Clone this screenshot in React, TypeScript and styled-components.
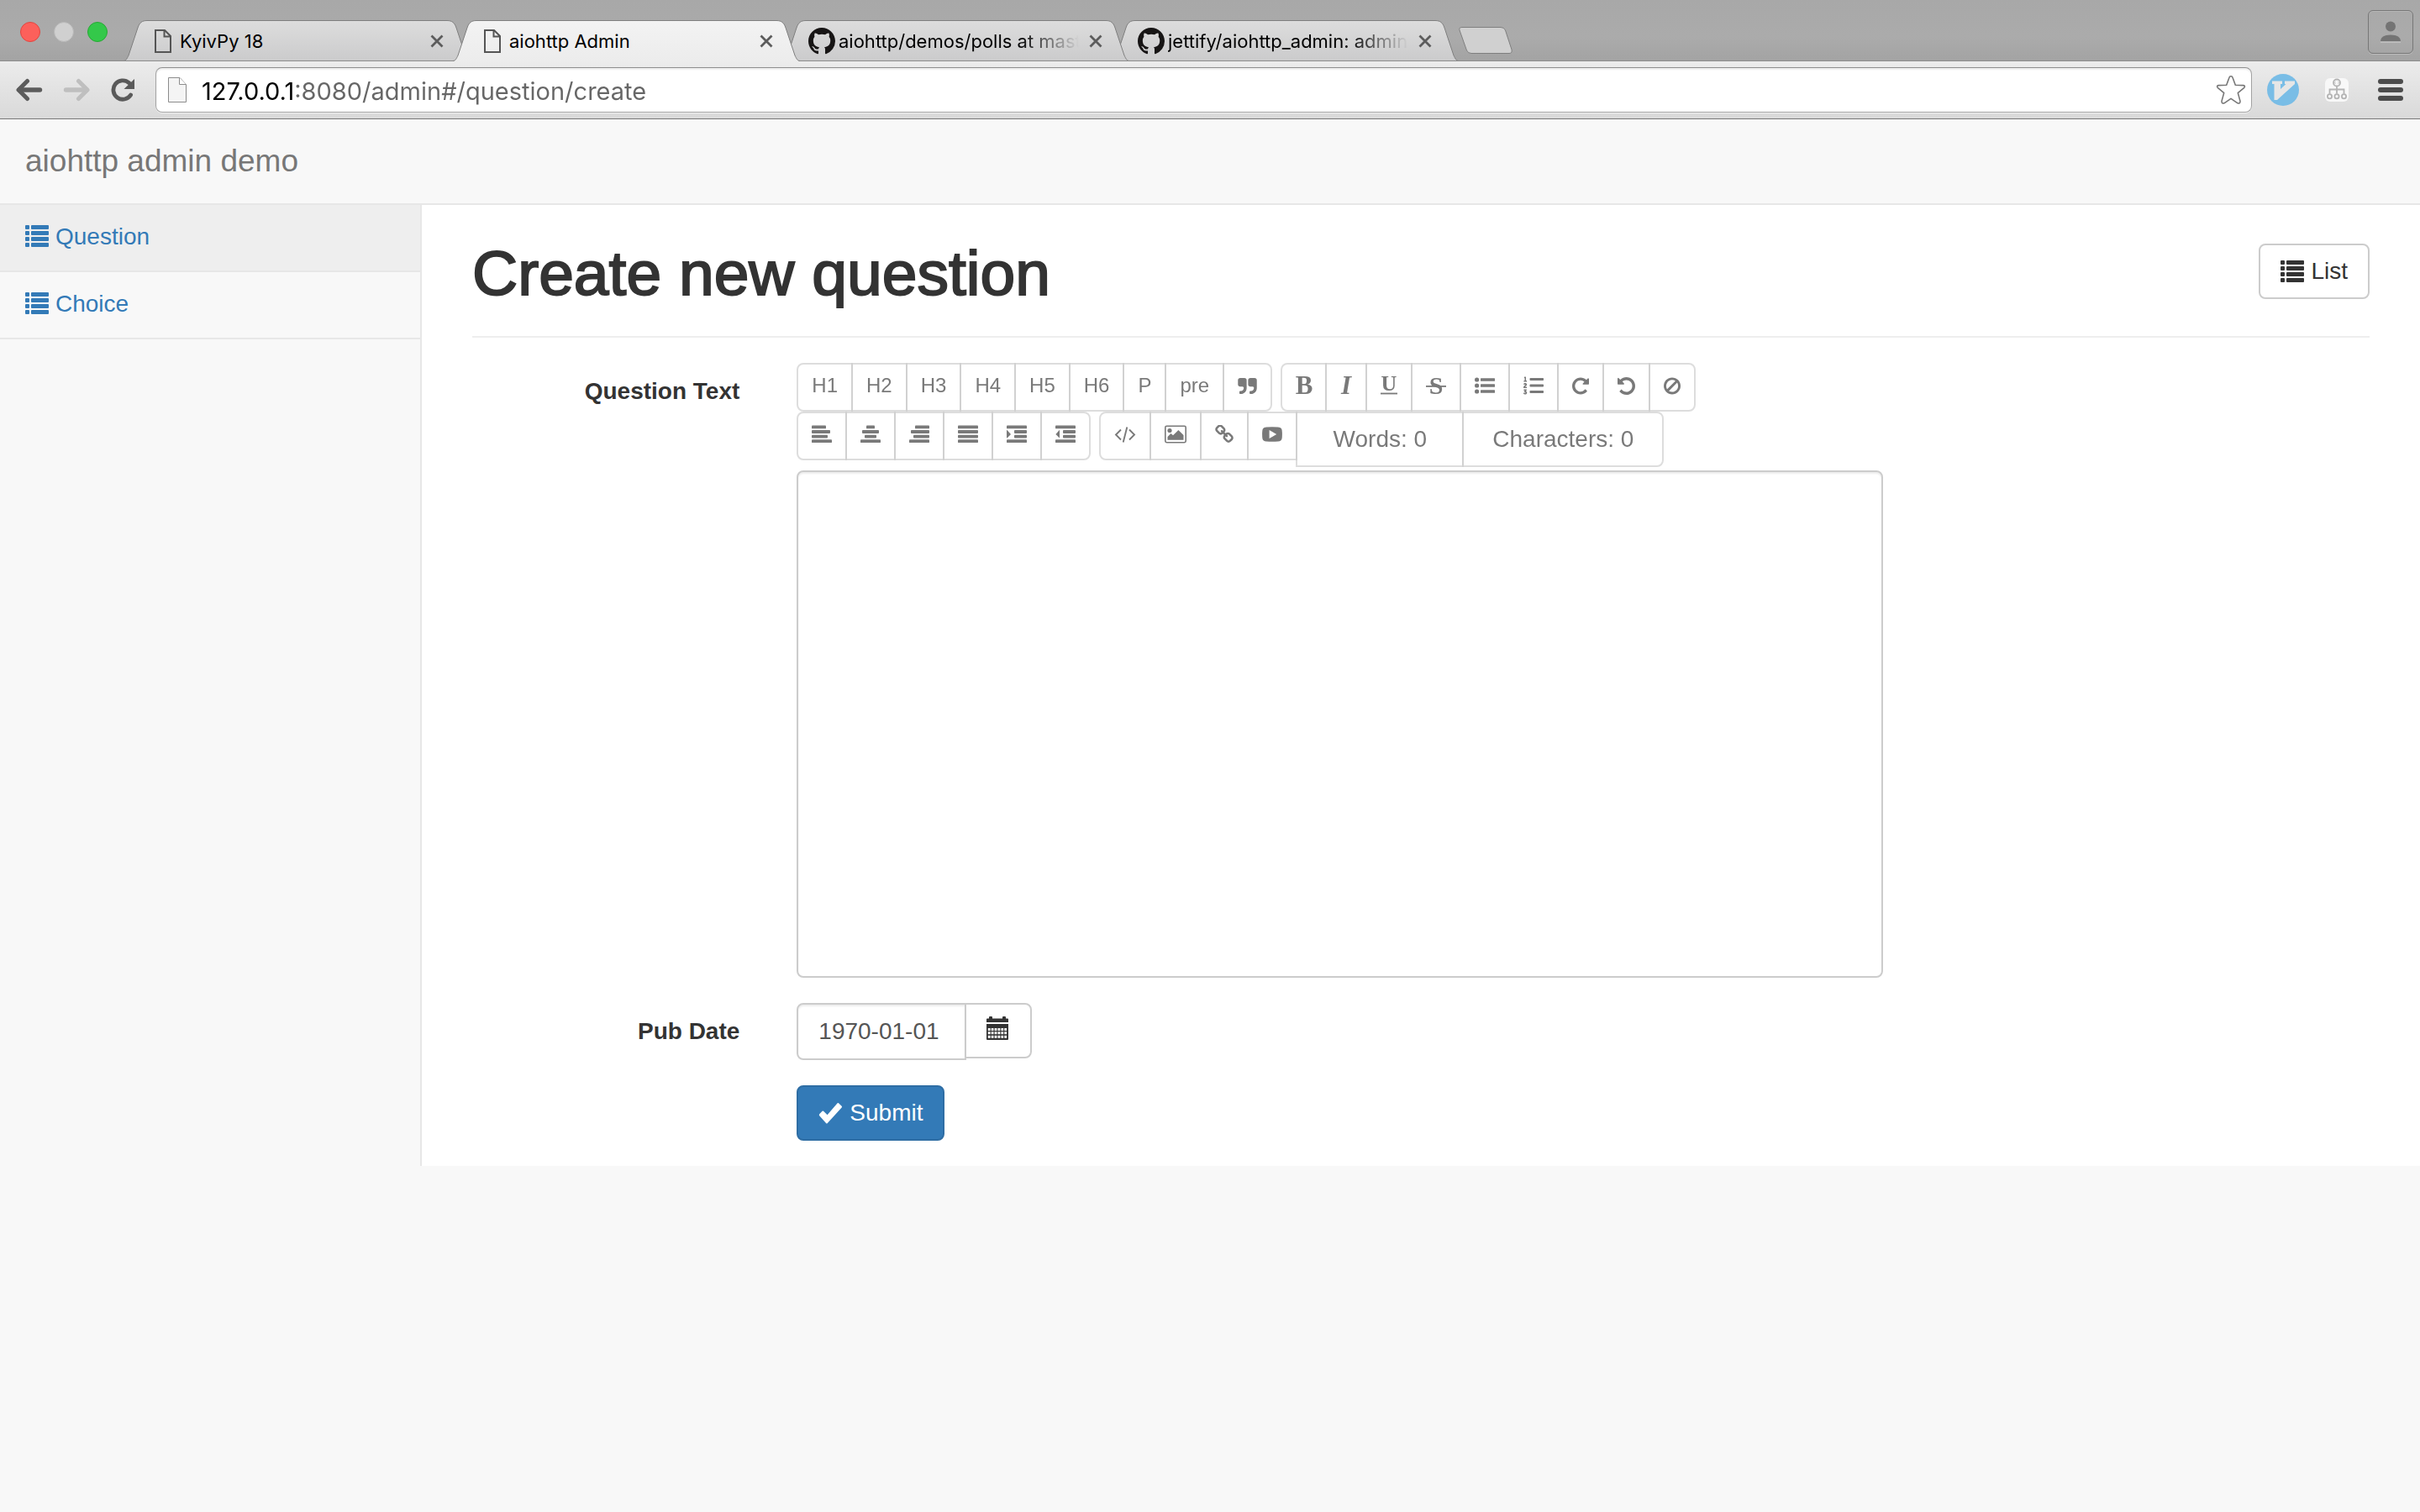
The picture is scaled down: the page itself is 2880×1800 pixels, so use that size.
import React, { useLayoutEffect, useState } from "react";
import styled, { createGlobalStyle, css } from "styled-components";
import { FaListOl } from "react-icons/fa";

const sans = `"Liberation Sans", Arial, Helvetica, sans-serif`;
const ui = `Inter, Roboto, sans-serif`;

const GlobalStyle = createGlobalStyle`
  *, *::before, *::after { box-sizing: border-box; }
  body { margin: 0; background: #f8f8f8; color: #333; font-family: ${sans}; font-size: 28px; line-height: 40px; }
  button, input, textarea { font: inherit; color: inherit; margin: 0; }
  svg { display: block; flex: none; }
`;

/* ---------- browser window ---------- */

const TabStrip = styled.header`
  display: flex;
  align-items: flex-end;
  height: 73px;
  padding: 0 8px 0 24px;
  background: linear-gradient(#a8a8a8, #ababab 60%, #a3a3a3);
  box-shadow: inset 0 -1px #8c8c8c;
`;

const WindowButtons = styled.div`
  display: flex;
  align-items: center;
  gap: 16px;
  height: 24px;
  margin: 0 19px 23px 0;
`;

const Light = styled.button<{ $fill: string; $edge: string }>`
  width: 24px;
  height: 24px;
  padding: 0;
  border: 1px solid ${(p) => p.$edge};
  border-radius: 50%;
  background: ${(p) => p.$fill};
`;

const Tabs = styled.nav`
  display: flex;
  flex: 1;
  align-items: flex-end;
`;

const TabItem = styled.div<{ $level: number }>`
  position: relative;
  z-index: ${(p) => p.$level};
  display: flex;
  align-items: center;
  width: 413px;
  height: 49px;
  padding: 0 20px 0 27px;
  & + & { margin-left: -21px; }
`;

const TabShape = styled.svg`
  position: absolute;
  inset: 0;
  z-index: -1;
`;

const TabButton = styled.button`
  display: flex;
  align-items: center;
  flex: 1;
  min-width: 0;
  padding: 0;
  border: 0;
  background: none;
  color: #000;
  font: 22px/32px ${ui};
  text-align: left;
`;

const TabIcon = styled.span`
  display: flex;
  justify-content: center;
  flex: none;
  width: 40px;
`;

const TabTitle = styled.span<{ $fade?: boolean }>`
  flex: 1;
  overflow: hidden;
  white-space: nowrap;
  ${(p) => p.$fade && css`mask-image: linear-gradient(to right, #000 75%, transparent);`}
`;

const CloseButton = styled.button`
  display: flex;
  align-items: center;
  justify-content: center;
  width: 40px;
  height: 32px;
  padding: 0;
  border: 0;
  background: none;
`;

const NewTab = styled.button`
  width: 64px;
  height: 32px;
  margin-bottom: 9px;
  padding: 0;
  border: 0;
  background: none;
`;

const Profile = styled.button`
  display: flex;
  align-items: center;
  justify-content: center;
  width: 54px;
  height: 52px;
  margin-bottom: 9px;
  padding: 0;
  border: 1px solid #777;
  border-radius: 6px;
  background: none;
  box-shadow: 0 1px #bcbcbc, inset 0 1px #b6b6b6;
`;

const Toolbar = styled.div`
  display: flex;
  align-items: center;
  gap: 24px;
  height: 69px;
  padding: 0 16px 0 19px;
  border-bottom: 1px solid #777;
  background: linear-gradient(#ececec, #d9d9d9);
`;

const ToolButton = styled.button<{ $w: number }>`
  display: flex;
  align-items: center;
  justify-content: center;
  width: ${(p) => p.$w}px;
  height: 40px;
  padding: 0;
  border: 0;
  background: none;
`;

const Extensions = styled.div`
  display: flex;
  gap: 26px;
  margin-left: -6px;
`;

const Omnibox = styled.div`
  display: flex;
  align-items: center;
  gap: 18px;
  flex: 1;
  height: 54px;
  padding: 0 6px 0 14px;
  border: 1px solid #a3a3a3;
  border-top-color: #8f8f8f;
  border-radius: 8px;
  background: #fff;
  box-shadow: 0 1px #f2f2f2, inset 0 2px 2px #eee;
`;

const Address = styled.input`
  flex: 1;
  min-width: 0;
  height: 40px;
  padding: 2px 0 0;
  border: 0;
  outline: 0;
  font: 29px/38px ${ui};
  color: #666;
  background-clip: text;
  -webkit-text-fill-color: transparent;
`;

/* ---------- admin page ---------- */

const Navbar = styled.div`
  display: flex;
  align-items: center;
  height: 102px;
  padding: 0 30px;
  border-bottom: 2px solid #e7e7e7;
  background: #f8f8f8;
`;

const Brand = styled.a`
  color: #777;
  font-size: 37px;
  line-height: 40px;
  text-decoration: none;
`;

const Columns = styled.div`
  display: flex;
`;

const Sidebar = styled.nav`
  width: 502px;
  border-right: 2px solid #e7e7e7;
`;

const Menu = styled.ul`
  margin: 0;
  padding: 0;
  list-style: none;
`;

const MenuLink = styled.a<{ $active?: boolean }>`
  display: flex;
  gap: 8px;
  padding: 18px 30px 20px;
  border-bottom: 2px solid #e7e7e7;
  background: ${(p) => (p.$active ? "#eee" : "transparent")};
  color: #337ab7;
  text-decoration: none;
  svg { margin-top: 6px; }
`;

const Main = styled.main`
  flex: 1;
  min-width: 0;
  padding: 40px 60px 30px;
  background: #fff;
`;

const PageHeader = styled.div`
  display: flex;
  align-items: flex-start;
  justify-content: space-between;
  padding-bottom: 34px;
  margin-bottom: 30px;
  border-bottom: 2px solid #eee;
  > button { margin-top: 6px; }
`;

const Title = styled.h1`
  margin: 0;
  font-size: 75px;
  font-weight: 500;
  line-height: 82px;
  -webkit-text-stroke: 2px #333;
`;

const Button = styled.button<{ $primary?: boolean }>`
  display: inline-flex;
  align-items: center;
  gap: 8px;
  padding: 12px 24px;
  border: 2px solid ${(p) => (p.$primary ? "#2e6da4" : "#ccc")};
  border-radius: 8px;
  background: ${(p) => (p.$primary ? "#337ab7" : "#fff")};
  color: ${(p) => (p.$primary ? "#fff" : "#333")};
  line-height: 38px;
  white-space: nowrap;
`;

const FormRow = styled.div`
  display: grid;
  grid-template-columns: 2fr 7fr 3fr;
  margin: 0 -30px;
  & + & { margin-top: 30px; }
`;

const Label = styled.label`
  padding: 14px 38px 0 30px;
  font-weight: 700;
  text-align: right;
`;

const Field = styled.div`
  grid-column: 2;
  display: flex;
  flex-direction: column;
  align-items: flex-start;
  padding: 0 30px;
`;

const EditorBar = styled.div`
  display: flex;
  flex-wrap: wrap;
  align-items: flex-start;
  column-gap: 10px;
  margin-bottom: 4px;
`;

const Group = styled.div`
  display: flex;
  align-items: flex-start;
`;

const EditButton = styled.button`
  display: flex;
  align-items: center;
  height: 58px;
  padding: 8px 16px 12px;
  border: 2px solid #ccc;
  background: #fff;
  color: #333;
  opacity: 0.65;
  font-size: 24px;
  line-height: 34px;
  & + & { margin-left: -2px; }
  &:first-child { border-radius: 8px 0 0 8px; }
  &:last-child { border-radius: 0 8px 8px 0; }
`;

const Counter = styled(EditButton)<{ $min: number }>`
  justify-content: center;
  height: 66px;
  min-width: ${(p) => p.$min}px;
  padding: 12px 24px;
  font-size: 28px;
`;

const Editor = styled.textarea`
  display: block;
  width: 100%;
  height: 604px;
  padding: 12px 24px;
  border: 2px solid #ccc;
  border-radius: 8px;
  background: #fff;
  box-shadow: inset 0 2px 2px rgba(0, 0, 0, 0.075);
  resize: none;
  outline: 0;
`;

const DateGroup = styled.div`
  display: flex;
  align-items: flex-start;
`;

const DateInput = styled.input`
  width: 202px;
  height: 68px;
  padding: 12px 24px;
  border: 2px solid #ccc;
  border-radius: 8px 0 0 8px;
  background: #fff;
  color: #555;
  box-shadow: inset 0 2px 2px rgba(0, 0, 0, 0.075);
  outline: 0;
`;

const CalendarButton = styled(Button)`
  height: 66px;
  margin-left: -2px;
  border-radius: 0 8px 8px 0;
  svg { margin-top: -6px; }
`;

/* ---------- icons ---------- */

const ListIcon = () => (
  <svg width="28" height="26" viewBox="0 0 28 26" fill="currentColor">
    {[0, 7, 14, 21].map((y) => (
      <g key={y}>
        <rect x="0" y={y} width="5" height="5" rx="1" />
        <rect x="7" y={y} width="21" height="5" rx="1" />
      </g>
    ))}
  </svg>
);

const CheckIcon = () => (
  <svg width="29" height="26" viewBox="0 0 29 26" fill="currentColor">
    <path d="M1.2 14.2 4.6 10.8Q5.3 10.2 6 10.8L10.6 15.2 22.4 1.4Q23.2.6 24 1.3L27.6 4.8Q28.4 5.6 27.7 6.4L10.6 25.2Q9.9 25.9 9.2 25.2L1.2 16.2Q.4 15.2 1.2 14.2Z" />
  </svg>
);

const CalendarIcon = () => (
  <svg width="28" height="28" viewBox="0 0 28 28" fill="currentColor">
    <path d="M0 7V3.5Q0 2.5 1 2.5H3V1Q3 0 4 0H6Q7 0 7 1V2.5H19V1Q19 0 20 0H22Q23 0 23 1V2.5H25Q26 2.5 26 3.5V7Z" />
    <path d="M0 9H26V27Q26 28 25 28H1Q0 28 0 27Z" />
    <g fill="#fff">
      {[14, 18.2, 22.8].map((y) =>
        [1.8, 5.7, 9.6, 13.5, 17.4, 21.3].map((x) => (
          <rect key={`${x}-${y}`} x={x} y={y} width="2.8" height="3" />
        ))
      )}
    </g>
  </svg>
);

type Bar = [number, number];
const Bars = ({ bars, arrow }: { bars: Bar[]; arrow?: string }) => (
  <svg width="24" height="22" viewBox="0 0 24 22" fill="currentColor">
    {bars.map(([x, w], i) => (
      <rect key={i} x={x} y={0.5 + i * 5.6} width={w} height="3.8" rx="0.9" />
    ))}
    {arrow && <path d={arrow} />}
  </svg>
);

const fa: Record<string, { box: string; w: number; h: number; d: string }> = {
  quote: {
    box: "64 128 1664 1408", w: 23, h: 19,
    d: "M832 320v704q0 104-40.5 198.5t-109.5 163.5-163.5 109.5-198.5 40.5h-64q-26 0-45-19t-19-45v-128q0-26 19-45t45-19h64q106 0 181-75t75-181v-32q0-40-28-68t-68-28h-224q-80 0-136-56t-56-136v-384q0-80 56-136t136-56h384q80 0 136 56t56 136zm896 0v704q0 104-40.5 198.5t-109.5 163.5-163.5 109.5-198.5 40.5h-64q-26 0-45-19t-19-45v-128q0-26 19-45t45-19h64q106 0 181-75t75-181v-32q0-40-28-68t-68-28h-224q-80 0-136-56t-56-136v-384q0-80 56-136t136-56h384q80 0 136 56t56 136z",
  },
  redo: {
    box: "128 128 1536 1536", w: 20, h: 21,
    d: "M1664 256v448q0 26-19 45t-45 19h-448q-42 0-59-40-17-39 14-69l138-138q-148-137-349-137-104 0-198.5 40.5t-163.5 109.5-109.5 163.5-40.5 198.5 40.5 198.5 109.5 163.5 163.5 109.5 198.5 40.5q119 0 225-52t179-147q7-10 23-12 15 0 25 9l137 138q9 8 9.5 20.5t-7.5 22.5q-109 132-264 204.5t-327 72.5q-156 0-298-61t-245-164-164-245-61-298 61-298 164-245 245-164 298-61q147 0 284.5 55.5t244.5 156.5l130-129q29-31 70-14 39 17 39 59z",
  },
  undo: {
    box: "128 128 1536 1536", w: 21, h: 21,
    d: "M1664 896q0 156-61 298t-164 245-245 164-298 61q-172 0-327-72.5t-264-204.5q-7-10-6.5-22.5t8.5-20.5l137-138q10-9 25-9 16 2 23 12 73 95 179 147t225 52q104 0 198.5-40.5t163.5-109.5 109.5-163.5 40.5-198.5-40.5-198.5-109.5-163.5-163.5-109.5-198.5-40.5q-98 0-188 35.5t-160 101.5l137 138q31 30 14 69-17 40-59 40h-448q-26 0-45-19t-19-45v-448q0-42 40-59 39-17 69 14l130 129q107-101 244.5-156.5t284.5-55.5q156 0 298 61t245 164 164 245 61 298z",
  },
  ban: {
    box: "128 128 1536 1536", w: 20, h: 21,
    d: "M1440 893q0-161-87-295l-754 753q137 89 297 89 111 0 211.5-43.5t173.5-116.5 116-174.5 43-212.5zm-999 299l755-754q-135-91-300-91-148 0-273 73t-198 199-73 274q0 162 89 299zm1223-299q0 157-61 300t-163.5 246-245 164-298.5 61-298.5-61-245-164-163.5-246-61-300 61-299.5 163.5-245.5 245-164 298.5-61 298.5 61 245 164 163.5 245.5 61 299.5z",
  },
  link: {
    box: "64 64 1664 1664", w: 22, h: 22,
    d: "M1520 1216q0-40-28-68l-208-208q-28-28-68-28-42 0-72 32 3 3 19 18.5t21.5 21.5 15 19 13 25.5 3.5 27.5q0 40-28 68t-68 28q-15 0-27.5-3.5t-25.5-13-19-15-21.5-21.5-18.5-19q-33 31-33 73 0 40 28 68l206 207q27 27 68 27 40 0 68-26l147-146q28-28 28-67zm-703-705q0-40-28-68l-206-207q-28-28-68-28-39 0-68 27l-147 146q-28 28-28 67 0 40 28 68l208 208q27 27 68 27 42 0 72-31-3-3-19-18.5t-21.5-21.5-15-19-13-25.5-3.5-27.5q0-40 28-68t68-28q15 0 27.5 3.5t25.5 13 19 15 21.5 21.5 18.5 19q33-31 33-73zm895 705q0 120-85 203l-147 146q-83 83-203 83-121 0-204-85l-206-207q-83-83-83-203 0-123 88-209l-88-88q-86 88-208 88-120 0-204-84l-208-208q-84-84-84-204t85-203l147-146q83-83 203-83 121 0 204 85l206 207q83 83 83 203 0 123-88 209l88 88q86-88 208-88 120 0 204 84l208 208q84 84 84 204z",
  },
};

const Glyph = ({ name }: { name: string }) => {
  const g = fa[name];
  return (
    <svg width={g.w} height={g.h} viewBox={g.box} fill="currentColor">
      <path d={g.d} />
    </svg>
  );
};

const serif = `"Liberation Serif", "Times New Roman", serif`;
const BoldIcon = () => (
  <svg width="19" height="22" viewBox="0 0 19 22" fill="currentColor" overflow="visible">
    <text x="10" y="21" textAnchor="middle" fontFamily={serif} fontSize="31" fontWeight="700">B</text>
  </svg>
);
const ItalicIcon = () => (
  <svg width="14" height="22" viewBox="0 0 14 22" fill="currentColor" overflow="visible">
    <text x="7" y="21" textAnchor="middle" fontFamily={serif} fontSize="31" fontWeight="700" fontStyle="italic">I</text>
  </svg>
);
const UnderlineIcon = () => (
  <svg width="20" height="22" viewBox="0 0 20 22" fill="currentColor" overflow="visible">
    <text x="10" y="17" textAnchor="middle" fontFamily={serif} fontSize="26" fontWeight="700">U</text>
    <rect x="0" y="19.6" width="20" height="1.8" />
  </svg>
);
const StrikeIcon = () => (
  <svg width="24" height="22" viewBox="0 0 24 22" fill="currentColor" overflow="visible">
    <text x="12" y="21" textAnchor="middle" fontFamily={serif} fontSize="30" fontWeight="700">S</text>
    <rect x="0" y="11" width="24" height="1.8" />
  </svg>
);
const BulletsIcon = () => (
  <svg width="24" height="20" viewBox="0 0 24 20" fill="currentColor">
    {[3, 10, 17].map((y) => (
      <g key={y}>
        <circle cx="2.6" cy={y} r="2.6" />
        <rect x="7" y={y - 1.7} width="17" height="3.4" rx="0.5" />
      </g>
    ))}
  </svg>
);
const CodeIcon = () => (
  <svg width="26" height="20" viewBox="0 0 26 20" fill="none" stroke="currentColor" strokeWidth="1.9">
    <path d="M8 4.5 2 10.5 8 16.5M18 4.5 24 10.5 18 16.5M15.3 1.5 10.7 19.5" />
  </svg>
);
const ImageIcon = () => (
  <svg width="26" height="22" viewBox="0 0 26 22" fill="currentColor">
    <rect x="0.8" y="1.3" width="24.4" height="19.4" rx="1.6" fill="none" stroke="currentColor" strokeWidth="1.6" />
    <circle cx="6" cy="6.5" r="2.6" />
    <path d="M3.5 17.7V14L7.5 10 10 12.3 16.4 6 22.5 12V17.7Z" />
  </svg>
);
const YoutubeIcon = () => (
  <svg width="24" height="18" viewBox="0 0 24 18" fill="currentColor" fillRule="evenodd">
    <path d="M5 .5Q12 0 19 .5 23 .6 23.6 4 24.2 9 23.6 14 23 17.3 19 17.5 12 18 5 17.5 1 17.3.4 14-.2 9 .4 4 1 .6 5 .5ZM8.6 4V14L17.2 9Z" />
  </svg>
);

const PageIcon = () => (
  <svg width="20" height="28" viewBox="0 0 20 28" fill="none" stroke="#555" strokeWidth="2">
    <path d="M1 1H12L19 8V27H1ZM11.5 1V8.5H19" />
  </svg>
);
const AddressPageIcon = () => (
  <svg width="22" height="31" viewBox="0 0 22 31" fill="#f4f4f4" stroke="#8c8c8c" strokeWidth="1">
    <path d="M.5.5H14L21.5 8.5V29.5H.5Z" />
    <path d="M13.5.5V8.5H21.5" fill="#fff" />
  </svg>
);
const GithubIcon = () => (
  <svg width="32" height="32" viewBox="0 0 16 16" fill="#171515">
    <path d="M8 0C3.58 0 0 3.58 0 8c0 3.54 2.29 6.53 5.47 7.59.4.07.55-.17.55-.38 0-.19-.01-.82-.01-1.49-2.01.37-2.53-.49-2.69-.94-.09-.23-.48-.94-.82-1.13-.28-.15-.68-.52-.01-.53.63-.01 1.08.58 1.23.82.72 1.21 1.87.87 2.33.66.07-.52.28-.87.51-1.07-1.78-.2-3.64-.89-3.64-3.95 0-.87.31-1.59.82-2.15-.08-.2-.36-1.02.08-2.12 0 0 .67-.21 2.2.82.64-.18 1.32-.27 2-.27s1.36.09 2 .27c1.53-1.04 2.2-.82 2.2-.82.44 1.1.16 1.92.08 2.12.51.56.82 1.27.82 2.15 0 3.07-1.87 3.75-3.65 3.95.29.25.54.73.54 1.48 0 1.07-.01 1.93-.01 2.2 0 .21.15.46.55.38A8.01 8.01 0 0 0 16 8c0-4.42-3.58-8-8-8z" />
  </svg>
);
const CloseIcon = () => (
  <svg width="16" height="16" viewBox="0 0 16 16" stroke="#5c5c5c" strokeWidth="2.8">
    <path d="M1.5 1.5 14.5 14.5M14.5 1.5 1.5 14.5" />
  </svg>
);
const ArrowIcon = ({ color, flip }: { color: string; flip?: boolean }) => (
  <svg width="32" height="28" viewBox="0 0 32 28" fill="none" stroke={color} strokeLinecap="round" strokeLinejoin="round">
    <g transform={flip ? "translate(32 0) scale(-1 1)" : undefined}>
      <path d="M13.5 3.5 3 14 13.5 24.5" strokeWidth="5" />
      <path d="M4 14H28.5" strokeWidth="5.4" />
    </g>
  </svg>
);
const ReloadIcon = () => (
  <svg width="30" height="28" viewBox="0 0 30 28">
    <path d="M24.6 20A11.2 11.2 0 1 1 22.5 5.6" fill="none" stroke="#5a5a5a" strokeWidth="4.8" strokeLinecap="round" />
    <path d="M29 1V13H16.5Z" fill="#5a5a5a" />
  </svg>
);
const StarIcon = () => (
  <svg width="36" height="36" viewBox="0 0 36 36" fill="none" stroke="#777" strokeWidth="1.6" strokeLinejoin="round">
    <path d="M18 1.8Q19.6 1.8 20 3.2L23.3 12.2 32.8 12.6Q35.4 13.2 33.8 15.4L26.3 21.6 29 31.4Q29.2 34.6 26 33.8L18 28.4 10 33.8Q6.8 34.6 7 31.4L9.7 21.6 2.2 15.4Q.6 13.2 3.2 12.6L12.7 12.2 16 3.2Q16.4 1.8 18 1.8Z" />
  </svg>
);
const VimiumIcon = () => (
  <svg width="38" height="38" viewBox="0 0 38 38">
    <circle cx="19" cy="19" r="19" fill="#79bde6" />
    <path d="M6 8.5H18V12H16V18L22.5 12H21V8.5H33V12L12 31H8.5V12H6Z" fill="#e6e6e6" />
  </svg>
);
const TreeIcon = () => (
  <svg width="28" height="28" viewBox="0 0 28 28" fill="none" stroke="#b4b4b4" strokeWidth="1.8">
    <rect x="0" y="0" width="28" height="28" rx="6" fill="#f8f8f8" stroke="none" />
    <circle cx="14" cy="5.5" r="4" />
    <path d="M12.5 4.2 11.3 5.5 12.5 6.8M15.5 4.2 16.7 5.5 15.5 6.8" strokeWidth="1" />
    <path d="M14 9.5V18.5M5.5 18.5V13.5H22.5V18.5" />
    <circle cx="5.5" cy="21.7" r="2.6" />
    <circle cx="14" cy="21.7" r="2.6" />
    <circle cx="22.5" cy="21.7" r="2.6" />
  </svg>
);
const MenuIcon = () => (
  <svg width="30" height="26" viewBox="0 0 30 26" fill="#4c4c4c">
    <rect width="30" height="6" rx="3" />
    <rect y="10" width="30" height="6" rx="3" />
    <rect y="20" width="30" height="6" rx="3" />
  </svg>
);
const PersonIcon = () => (
  <svg width="24" height="26" viewBox="0 0 24 26" fill="#747474">
    <circle cx="12" cy="6.5" r="6" />
    <path d="M0 24.5Q0 16.5 12 16.5 24 16.5 24 24.5Z" />
    <rect y="24.5" width="24" height="1" fill="#d5d5d5" />
  </svg>
);

const TAB_EDGE = "M0 48.5C3 48.5 4 46 6 42L17 9C19 3 22 .5 28 .5H385C391 .5 394 3 396 9L407 42C409 46 410 48.5 413 48.5";

type TabProps = { title: string; icon: React.ReactNode; level: number; active?: boolean; fade?: boolean };
const Tab = ({ title, icon, level, active, fade }: TabProps) => (
  <TabItem $level={level}>
    <TabShape width="413" height="49" viewBox="0 0 413 49" aria-hidden="true">
      <defs>
        <linearGradient id={`tab${level}`} x1="0" y1="0" x2="0" y2="1">
          <stop offset="0" stopColor={active ? "#f3f3f3" : "#dddddd"} />
          <stop offset="1" stopColor={active ? "#ececec" : "#cbcbcc"} />
        </linearGradient>
      </defs>
      <path d={active ? `${TAB_EDGE}V49H0Z` : `${TAB_EDGE}Z`} fill={`url(#tab${level})`} />
      <path d={TAB_EDGE} fill="none" stroke="#7f7f7f" />
      {!active && <path d="M0 48.5H413" stroke="#8c8c8c" />}
    </TabShape>
    <TabButton aria-current={active ? "page" : undefined}>
      <TabIcon>{icon}</TabIcon>
      <TabTitle $fade={fade}>{title}</TabTitle>
    </TabButton>
    <CloseButton aria-label="Close tab"><CloseIcon /></CloseButton>
  </TabItem>
);

/* The host is drawn darker than the rest of the address. */
const AddressField = ({ host, rest }: { host: string; rest: string }) => {
  const [hostWidth, setHostWidth] = useState(0);
  useLayoutEffect(() => {
    const pen = document.createElement("canvas").getContext("2d");
    if (!pen) return;
    pen.font = `29px ${ui}`;
    setHostWidth(Math.round(pen.measureText(host).width));
  }, [host]);
  return (
    <Address
      aria-label="Address"
      defaultValue={host + rest}
      style={{ backgroundImage: `linear-gradient(to right, #000 ${hostWidth}px, #666 ${hostWidth}px)` }}
    />
  );
};

const headings = ["H1", "H2", "H3", "H4", "H5", "H6", "P", "pre"];

const inline: [string, React.ReactNode][] = [
  ["Bold", <BoldIcon />],
  ["Italic", <ItalicIcon />],
  ["Underline", <UnderlineIcon />],
  ["Strikethrough", <StrikeIcon />],
  ["Unordered list", <BulletsIcon />],
  ["Ordered list", <FaListOl size={24} />],
  ["Redo", <Glyph name="redo" />],
  ["Undo", <Glyph name="undo" />],
  ["Clear", <Glyph name="ban" />],
];

const align: [string, React.ReactNode][] = [
  ["Align left", <Bars bars={[[0, 17], [0, 22], [0, 19], [0, 24]]} />],
  ["Align center", <Bars bars={[[7, 10], [2, 20], [5, 14], [0, 24]]} />],
  ["Align right", <Bars bars={[[7, 17], [2, 22], [5, 19], [0, 24]]} />],
  ["Justify", <Bars bars={[[0, 24], [0, 24], [0, 24], [0, 24]]} />],
  ["Indent", <Bars bars={[[0, 24], [9, 15], [9, 15], [0, 24]]} arrow="M.4 5.8Q0 5.8 0 6.4V15Q0 15.6.5 15.4L5 10.9 .5 6Z" />],
  ["Outdent", <Bars bars={[[0, 24], [9, 15], [9, 15], [0, 24]]} arrow="M5 5.8V15.6L.4 10.9Z" />],
];

const inserts: [string, React.ReactNode][] = [
  ["Edit HTML", <CodeIcon />],
  ["Insert image", <ImageIcon />],
  ["Insert link", <Glyph name="link" />],
  ["Insert video", <YoutubeIcon />],
];

const iconButtons = (items: [string, React.ReactNode][]) =>
  items.map(([name, icon]) => (
    <EditButton key={name} type="button" disabled aria-label={name}>{icon}</EditButton>
  ));

export default function App() {
  return (
    <>
      <GlobalStyle />
      <TabStrip>
        <WindowButtons>
          <Light $fill="#fc605b" $edge="#e2453f" aria-label="Close window" />
          <Light $fill="#d0d0d0" $edge="#b8b8b8" aria-label="Minimize window" />
          <Light $fill="#34c84a" $edge="#27a934" aria-label="Zoom window" />
        </WindowButtons>
        <Tabs>
          <Tab title="KyivPy 18" icon={<PageIcon />} level={3} />
          <Tab title="aiohttp Admin" icon={<PageIcon />} level={4} active />
          <Tab title="aiohttp/demos/polls at master" icon={<GithubIcon />} level={2} fade />
          <Tab title="jettify/aiohttp_admin: admin" icon={<GithubIcon />} level={1} fade />
          <NewTab aria-label="New tab">
            <svg width="64" height="32" viewBox="0 0 64 32">
              <path d="M4 .5H50Q54 .5 55.5 4L63 27Q64 31.5 60 31.5H15Q11 31.5 9.5 28L1 4Q0 .5 4 .5Z" fill="#d0d0d0" stroke="#7f7f7f" />
            </svg>
          </NewTab>
        </Tabs>
        <Profile aria-label="Profile"><PersonIcon /></Profile>
      </TabStrip>
      <Toolbar>
        <ToolButton $w={32} aria-label="Back"><ArrowIcon color="#5c5c5c" /></ToolButton>
        <ToolButton $w={32} aria-label="Forward"><ArrowIcon color="#bfbfbf" flip /></ToolButton>
        <ToolButton $w={30} aria-label="Reload"><ReloadIcon /></ToolButton>
        <Omnibox>
          <AddressPageIcon />
          <AddressField host="127.0.0.1" rest=":8080/admin#/question/create" />
          <ToolButton $w={36} aria-label="Bookmark"><StarIcon /></ToolButton>
        </Omnibox>
        <Extensions>
          <ToolButton $w={38} aria-label="Vimium"><VimiumIcon /></ToolButton>
          <ToolButton $w={38} aria-label="Tree extension"><TreeIcon /></ToolButton>
          <ToolButton $w={38} aria-label="Menu"><MenuIcon /></ToolButton>
        </Extensions>
      </Toolbar>

      <Navbar>
        <Brand href="#/">aiohttp admin demo</Brand>
      </Navbar>
      <Columns>
        <Sidebar>
          <Menu>
            <li><MenuLink href="#/question" $active><ListIcon />Question</MenuLink></li>
            <li><MenuLink href="#/choice"><ListIcon />Choice</MenuLink></li>
          </Menu>
        </Sidebar>
        <Main>
          <PageHeader>
            <Title>Create new question</Title>
            <Button type="button"><ListIcon />List</Button>
          </PageHeader>
          <form onSubmit={(e) => e.preventDefault()}>
            <FormRow>
              <Label htmlFor="question-text">Question Text</Label>
              <Field>
                <EditorBar>
                  <Group>
                    {headings.map((h) => (
                      <EditButton key={h} type="button" disabled>{h}</EditButton>
                    ))}
                    <EditButton type="button" disabled aria-label="Quote"><Glyph name="quote" /></EditButton>
                  </Group>
                  <Group>{iconButtons(inline)}</Group>
                  <Group>{iconButtons(align)}</Group>
                  <Group>
                    {iconButtons(inserts)}
                    <Counter as="div" $min={200}>Words: 0</Counter>
                    <Counter as="div" $min={240}>Characters: 0</Counter>
                  </Group>
                </EditorBar>
                <Editor id="question-text" />
              </Field>
            </FormRow>
            <FormRow>
              <Label htmlFor="pub-date">Pub Date</Label>
              <Field>
                <DateGroup>
                  <DateInput id="pub-date" type="text" defaultValue="1970-01-01" />
                  <CalendarButton type="button" aria-label="Open calendar"><CalendarIcon /></CalendarButton>
                </DateGroup>
              </Field>
            </FormRow>
            <FormRow>
              <Field>
                <Button type="submit" $primary><CheckIcon />Submit</Button>
              </Field>
            </FormRow>
          </form>
        </Main>
      </Columns>
    </>
  );
}
